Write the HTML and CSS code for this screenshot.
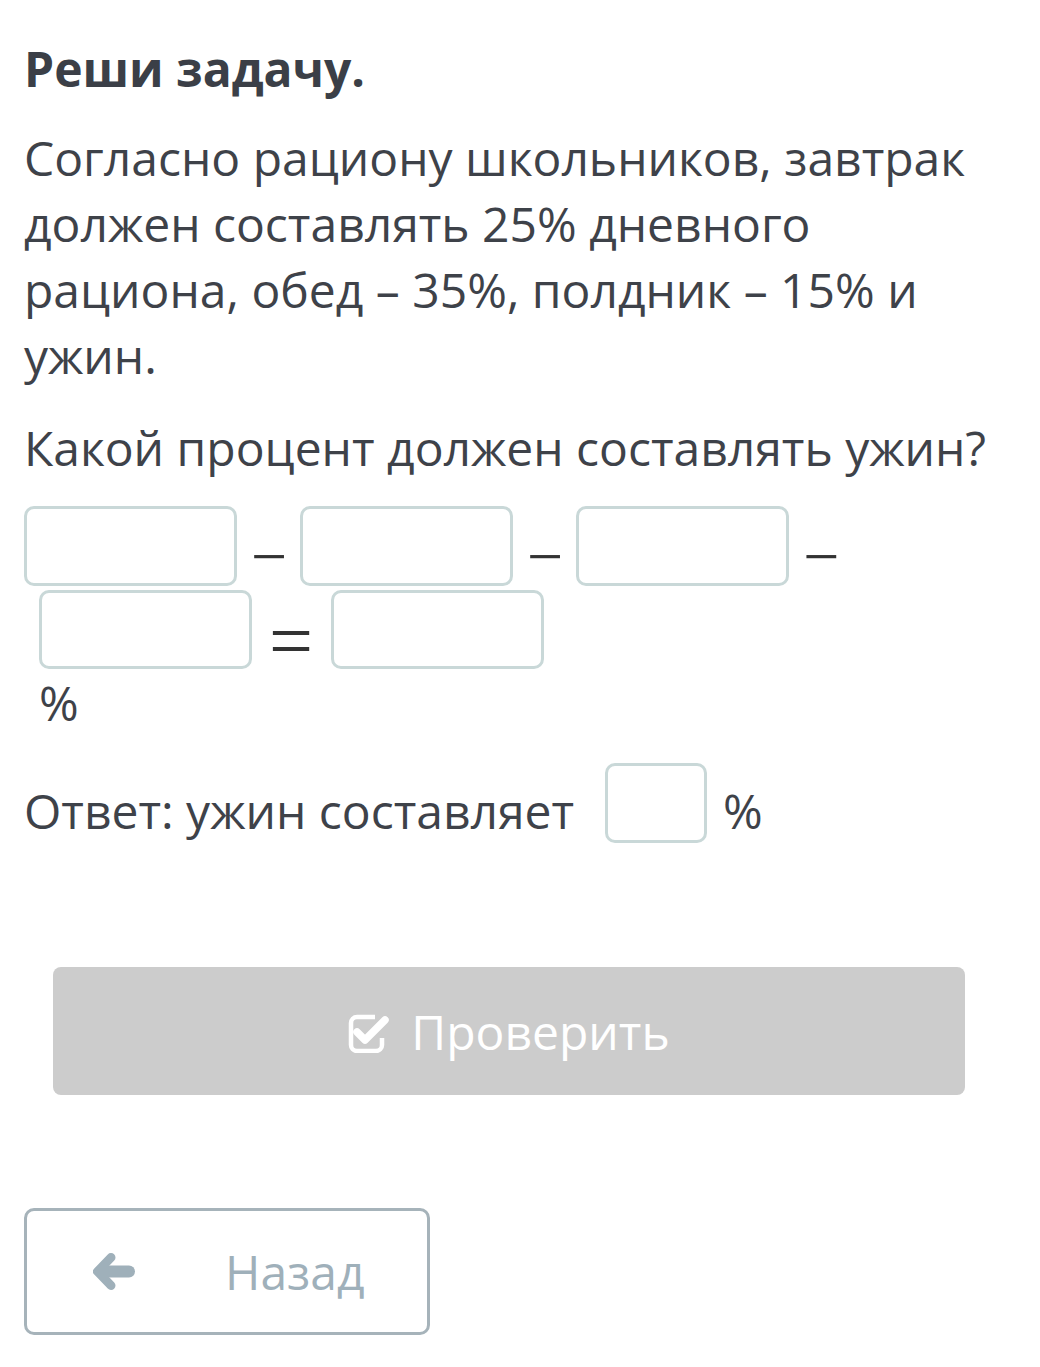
FILE: index.html
```html
<!DOCTYPE html>
<html lang="ru">
<head>
  <meta charset="UTF-8">
  <meta name="viewport" content="width=device-width, initial-scale=1.0">
  <title>Реши задачу</title>
  <link rel="stylesheet" href="styles.css">
</head>
<body>
  <div class="task">
    <h1 class="task-title">Реши задачу.</h1>
    <p class="task-text">Согласно рациону школьников, завтрак должен составлять 25% дневного рациона, обед – 35%, полдник – 15% и ужин.</p>
    <p class="task-text question">Какой процент должен составлять ужин?</p>

    <div class="formula">
      <div class="formula-row">
        <input class="answer-box" type="text">
        <span class="op op-minus">−</span>
        <input class="answer-box" type="text">
        <span class="op op-minus">−</span>
        <input class="answer-box" type="text">
        <span class="op op-minus">−</span>
      </div>
      <div class="formula-row indent">
        <input class="answer-box" type="text">
        <span class="op op-equal">=</span>
        <input class="answer-box" type="text">
      </div>
      <div class="formula-unit indent">%</div>
    </div>

    <div class="answer-line">
      <span>Ответ: ужин составляет</span>
      <input class="answer-box small" type="text">
      <span>%</span>
    </div>

    <button class="check-btn" type="button">
      <svg class="check-icon" viewBox="0 0 42 40" width="42" height="40">
        <path d="M27 4 H9 a6 6 0 0 0 -6 6 V32 a6 6 0 0 0 6 6 H28 a6 6 0 0 0 6 -6 V25" fill="none" stroke="#fff" stroke-width="4.5"/>
        <path d="M9 19 L17 27 L37 7" fill="none" stroke="#fff" stroke-width="7.5" stroke-linecap="round" stroke-linejoin="round"/>
      </svg>
      <span>Проверить</span>
    </button>

    <button class="back-btn" type="button">
      <svg class="back-icon" viewBox="0 0 42 37" width="42" height="37">
        <polyline points="18,4.5 4.5,18.5 18,32.5" fill="none" stroke="#9fb0ba" stroke-width="9" stroke-linecap="round" stroke-linejoin="round"/>
        <line x1="8" y1="18.5" x2="36" y2="18.5" stroke="#9fb0ba" stroke-width="12" stroke-linecap="round"/>
      </svg>
      <span>Назад</span>
    </button>
  </div>
</body>
</html>
```

FILE: styles.css
```css
body {
  margin: 0;
  background: #fff;
  font-family: "Open Sans", "Noto Sans", sans-serif;
  color: #3e4249;
}
.task {
  padding: 0 24px;
}
.task-title {
  margin: 36px 0 0;
  font-size: 48px;
  font-weight: 700;
  line-height: 66px;
  color: #3b3f47;
}
.task-text {
  margin: 23px 0 0;
  font-size: 48px;
  line-height: 66px;
}
.task-text.question {
  margin-top: 26px;
}
.formula {
  margin-top: 25px;
  font-size: 48px;
  line-height: 66px;
}
.formula-row {
  display: flex;
  align-items: flex-start;
  margin-bottom: 4px;
}
.formula-row.indent {
  margin-bottom: 0;
}
.indent {
  padding-left: 15px;
}
.answer-box {
  box-sizing: border-box;
  width: 213px;
  height: 80px;
  margin: 0;
  border: 3px solid #c9d8d8;
  border-radius: 10px;
  background: #fff;
  font: inherit;
  outline: none;
}
.formula-row.indent .answer-box {
  height: 79px;
}
.answer-box.small {
  width: 102px;
}
.op {
  display: flex;
  align-items: center;
  box-sizing: border-box;
  height: 80px;
  padding-top: 22px;
  font-family: "Liberation Serif", serif;
  color: #333;
  line-height: 1;
}
.op-minus {
  font-size: 64px;
  margin: 0 13px 0 14px;
}
.op-equal {
  font-size: 78px;
  margin: 0 18px 0 17px;
}
.formula-unit {
  line-height: 66px;
}
.answer-line {
  display: flex;
  align-items: flex-end;
  margin-top: 27px;
  font-size: 48px;
  line-height: 66px;
}
.answer-line .answer-box {
  margin: 0 16px 1px 31px;
}
.check-btn {
  display: flex;
  align-items: center;
  justify-content: center;
  gap: 21px;
  width: 912px;
  height: 128px;
  margin: 123px 0 0 29px;
  border: none;
  border-radius: 8px;
  background: #cccccc;
  color: #fff;
  font-family: "Open Sans", "Noto Sans", sans-serif;
  font-size: 48px;
  padding: 0;
}
.check-icon {
  margin-top: 4px;
}
.back-btn {
  display: flex;
  align-items: center;
  gap: 90px;
  box-sizing: border-box;
  width: 406px;
  height: 127px;
  margin: 113px 0 30px;
  padding: 0 0 0 66px;
  border: 3px solid #a6b3ba;
  border-radius: 10px;
  background: #fff;
  color: #9fb0ba;
  font-family: "Open Sans", "Noto Sans", sans-serif;
  font-size: 48px;
}
```
